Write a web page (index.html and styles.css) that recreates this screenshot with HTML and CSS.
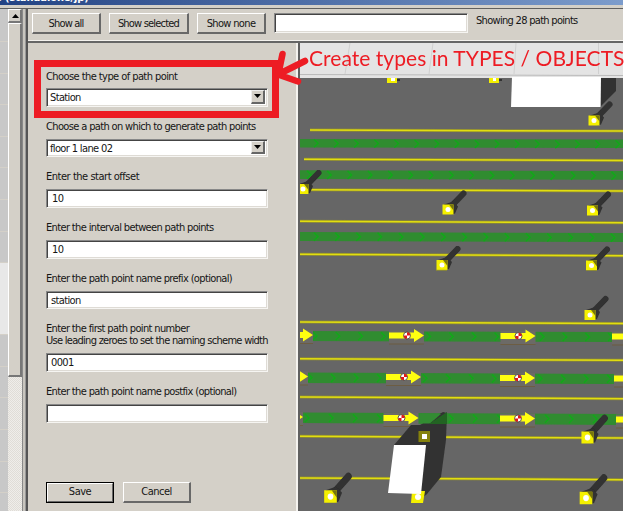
FILE: index.html
```html
<!DOCTYPE html>
<html lang="en">
<head>
<meta charset="utf-8">
<title>Path points</title>
<link rel="stylesheet" href="styles.css">
</head>
<body>
<div class="window">
  <header class="titlebar"><span>e (standalone/jp)</span></header>
  <div class="content">
    <aside class="list">
      <i class="first"></i><i></i><i></i><i></i><i></i><i></i><i></i><i></i>
      <i class="selected"></i><i></i><i></i><i></i><i></i><i></i><i></i>
    </aside>
    <div class="scrollbar">
      <div class="scroll-up"><svg width="7" height="4"><path d="M0 4h7L3.5 0z"/></svg></div>
      <div class="thumb"></div>
    </div>
    <div class="splitter"></div>
    <main class="main">
      <div class="toolbar">
        <button class="btn b1"><span>Show all</span></button>
        <button class="btn b2"><span>Show selected</span></button>
        <button class="btn b3"><span>Show none</span></button>
        <div class="field search"></div>
        <span class="status">Showing 28 path points</span>
      </div>
      <div class="body">
        <form class="form">
          <label class="l1">Choose the type of path point</label>
          <div class="field select"><span>Station</span><b><svg width="7" height="4"><path d="M0 0h7L3.5 4z"/></svg></b></div>
          <label class="l2">Choose a path on which to generate path points</label>
          <div class="field select"><span>floor 1 lane 02</span><b><svg width="7" height="4"><path d="M0 0h7L3.5 4z"/></svg></b></div>
          <label class="l3">Enter the start offset</label>
          <div class="field num">10</div>
          <label class="l4">Enter the interval between path points</label>
          <div class="field num">10</div>
          <label class="l5">Enter the path point name prefix (optional)</label>
          <div class="field">station</div>
          <label class="l6">Enter the first path point number<br><span class="l6b">Use leading zeroes to set the naming scheme width</span></label>
          <div class="field">0001</div>
          <label class="l7">Enter the path point name postfix (optional)</label>
          <div class="field"></div>
          <div class="actions">
            <button type="button" class="btn save"><span>Save</span></button>
            <button type="button" class="btn cancel"><span>Cancel</span></button>
          </div>
        </form>
        <svg class="scene" viewBox="300 43 323 468" width="323" height="468">
          <defs>
            <filter id="soft" x="-20%" y="-20%" width="140%" height="140%"><feGaussianBlur stdDeviation=".6"/></filter>
            <g id="post">
              <path d="M2-2L15.500-16" stroke="#303030" stroke-width="6" stroke-linecap="round"/>
              <path d="M-4-5L5-8 10-3 7 4 4 5z" fill="#303030"/>
              <path d="M-5.500-5H5.500V5H-5.500z" fill="#f4f000"/>
              <path d="M1-5H5.500V1z" fill="#77740c"/>
              <circle r="2.500" fill="#fff"/>
            </g>
            <g id="arrow">
              <path d="M0-5H35V8H0z" fill="#6c6a66"/>
              <path d="M0 8.500H35" stroke="#6e5a38" stroke-width=".8"/>
              <path d="M0-3H25V-6.500L35 0 25 6.500V3H0z" fill="#ffff10"/>
              <circle cx="18" r="3.500" fill="#fff" stroke="#333" stroke-width=".8"/>
              <path d="M18 0V-3.200A3.200 3.200 0 0 1 21.200 0zM18 0V3.200A3.200 3.200 0 0 1 14.800 0z" fill="#e01818"/>
            </g>
            <path id="chev" d="M-2-4L2 0-2 4" fill="none" stroke="#10aa18" stroke-width="1.4"/>
          </defs>
          <path d="M300 43H623V79H300z" fill="#e4e4e4"/>
          <path d="M350 43L345 74M433 43L429 74M516 43L514 74M598.500 43V74" stroke="#d0d0d0" fill="none"/>
          <path d="M300 74.500L623 75.500" stroke="#bbb"/>
          <path d="M300 78H623V511H300z" fill="#666"/>
          <g filter="url(#soft)">
            <path d="M601 78H616V91L601 106z" fill="#333"/>
            <path d="M387 78H397V83H387zM489 78H499V83H489z" fill="#f4f000"/>
            <path d="M391 78H395V81H391zM493 78H496V81H493z" fill="#fff"/>
            <path d="M397 79H400V81H397zM499 79H502V81H499z" fill="#333"/>
            <path d="M512 77H601L600.500 107H511z" fill="#fff"/>
          </g>
          <g fill="#308c30">
            <path d="M300 139L623 139.500V148L300 147.500z"/>
            <path d="M300 170.300L623 171V179.700L300 179z"/>
            <path d="M300 232L623 233V242L300 241z"/>
            <path d="M300 331L623 332V342L300 341z"/>
            <path d="M300 372.500L623 374V384L300 383z"/>
            <path d="M300 412.500L623 414V425L300 423z"/>
          </g>
          <g id="chevrons"></g>
          <g stroke="#8f8c32" stroke-width="3">
            <path d="M310 130L623 131M304 159.300L623 160.500M308 189.700L623 191M300 221.200L623 222.700M300 254.200L623 255.700M300 322L623 323.500M300 358.700L623 360.300M300 397L623 398.700M300 436.300L623 438M300 478L623 479.700"/>
          </g>
          <g stroke="#e2de10" stroke-width="1.500">
            <path d="M310 130L623 131M304 159.300L623 160.500M308 189.700L623 191M300 221.200L623 222.700M300 254.200L623 255.700M300 322L623 323.500M300 358.700L623 360.300M300 397L623 398.700M300 436.300L623 438M300 478L623 479.700"/>
          </g>
          <use href="#arrow" x="278" y="335"/><use href="#arrow" x="389" y="335.500"/><use href="#arrow" x="500.500" y="336"/><use href="#arrow" x="612" y="336.500"/>
          <use href="#arrow" x="273" y="376.500"/><use href="#arrow" x="386" y="377"/><use href="#arrow" x="500" y="378"/><use href="#arrow" x="614" y="378.500"/>
          <use href="#arrow" x="268" y="417"/><use href="#arrow" x="383.500" y="418"/><use href="#arrow" x="500" y="418.500"/><use href="#arrow" x="616" y="419.500"/>
          <g filter="url(#soft)">
            <path d="M394 445L411 425H420L443 412 447 413 446 440 441 477 427 494 420 500z" fill="#333"/>
            <path d="M420 414H441L430 423.500H420z" fill="#308c30"/>
            <path d="M429 424L447 412V424z" fill="#246324"/>
            <path d="M418.500 431H430V442H418.500z" fill="#85820c"/>
            <path d="M422 434H427V439H422z" fill="#fff"/>
            <path d="M412 491H425L423 503H411z" fill="#f4f000"/>
            <circle cx="418" cy="497" r="3" fill="#fff"/>
            <path d="M394 445H426L421 494 388 493z" fill="#fff"/>
            <use href="#post" x="303" y="189"/><use href="#post" x="448" y="209.500"/><use href="#post" x="592.500" y="210.500"/>
            <use href="#post" x="442" y="265"/><use href="#post" x="591.500" y="265.500"/><use href="#post" x="590" y="315"/>
            <use href="#post" x="594" y="120.500"/>
            <use href="#post" transform="translate(330.500 496.500) scale(1.150 1.250)"/>
            <use href="#post" transform="translate(587.500 437.500) scale(1.100 1.200)"/>
            <use href="#post" transform="translate(586 498) scale(1.150 1.250)"/>
          </g>
          <path d="M436 270.300H447M586 270.500H597" stroke="#8f8c32"/>
        </svg>
      </div>
    </main>
  </div>
  <svg class="annotation" width="624" height="511">
    <path d="M37.500 63.500H275.500V114.500H37.500z" fill="none" stroke="#ed1c24" stroke-width="7"/>
    <path d="M282.500 54L279 71M305 61L278 74.500 298 81.500" fill="none" stroke="#ed1c24" stroke-width="6.500" stroke-linecap="round" stroke-linejoin="round"/>
  </svg>
  <div class="note">Create types in TYPES / OBJECTS</div>
</div>
<script src="scene.js"></script>
</body>
</html>
```
FILE: styles.css
```css
* { box-sizing: border-box; }
body { margin: 0; background: #fff; }
.window {
  position: relative;
  width: 624px;
  height: 511px;
  overflow: hidden;
  display: flex;
  flex-direction: column;
  font: 11px/12px "DejaVu Sans Condensed", "DejaVu Sans", sans-serif;
  font-stretch: condensed;
  color: #151515;
  letter-spacing: -0.64px;
}
.titlebar {
  height: 8px;
  width: 623px;
  flex: none;
  overflow: hidden;
  background: linear-gradient(90deg, #234384, #7c9ccc);
  border-bottom: 3px solid #d4d0c8;
  color: #fff;
  font-weight: bold;
}
.titlebar span { display: block; margin: -8px 0 0 -5px; letter-spacing: -0.1px; }
.content { display: flex; flex: 1; width: 623px; border-top: 1px solid #606060; background: #d4d0c8; }
.list { width: 8px; overflow: hidden; background: #c8c8c8; }
.list i { display: block; height: 31.6px; border-bottom: 1px solid #d4d0c8; }
.list .first { height: 33px; }
.list .selected { height: 72px; background: #e8e8e8; }
.scrollbar {
  width: 14px;
  background: repeating-conic-gradient(#e0ddd7 0 25%, #efedea 0 50%) 0 0 / 2px 2px;
}
.scroll-up, .thumb { background: #d4d0c8; border: 1px solid #fff; border-right: 2px solid #777; border-bottom: 2px solid #777; }
.scroll-up { height: 14px; display: flex; align-items: center; justify-content: center; padding-left: 1px; }
.scroll-up svg, .select svg { display: block; }
.thumb { height: 354px; }
.splitter { width: 6px; border-left: 1px solid #888; border-right: 2px solid #555; background: linear-gradient(90deg, #c8c5be 0 2px, #999 2px); }
.main { flex: 1; display: flex; flex-direction: column; }
.toolbar { height: 34px; display: flex; padding: 4px 0 0 4px; border-bottom: 2px solid #666; box-shadow: inset 0 -1px #f4f2ee; }
.btn {
  height: 21px;
  padding: 2px 0 0;
  margin: 0;
  border: 1px solid #fff;
  border-right: 2px solid #686868;
  border-bottom: 2px solid #686868;
  background: #d4d0c8;
  font: inherit;
  color: inherit;
  letter-spacing: -0.8px;
  flex: none;
}
.b1 { width: 69px; }
.b2 { width: 80px; margin-left: 8px; }
.b3 { width: 69px; margin-left: 8px; letter-spacing: -0.65px; }
.field {
  height: 18.7px;
  flex: none;
  border: 1px solid #888;
  border-right-color: #f6f5f2;
  border-bottom-color: #f6f5f2;
  box-shadow: inset 1px 1px #444, inset -1px -1px #dedbd5;
  background: #fff;
  line-height: 17px;
  padding-left: 4px;
  white-space: pre;
}
.search { width: 194px; height: 20px; margin-left: 8px; }
.status { margin: 2px 0 0 8px; letter-spacing: -0.7px; }
.body { flex: 1; display: flex; }
.form {
  width: 272px;
  padding: 28px 0 0 18px;
  border-right: 2px solid #606060;
  box-shadow: inset -2px 0 #f4f2ee;
  display: flex;
  flex-direction: column;
}
label { display: block; height: 12px; margin-bottom: 6px; white-space: nowrap; }
.l1 { height: 11px; letter-spacing: -0.57px; }
.l3 { letter-spacing: -0.47px; }
.l6b { letter-spacing: -0.72px; }
.form .field { width: 222px; margin-bottom: 14px; }
.select { display: flex; justify-content: space-between; padding: 1px 2px 2px 3px; line-height: 16px; }
.select b { width: 14px; background: #d4d0c8; border: 1px solid #eee; border-right: 2px solid #666; border-bottom: 2px solid #666; display: flex; align-items: center; justify-content: center; }
.num { padding-left: 5px; }
.l6 { height: 24px; }
.actions { display: flex; gap: 9px; margin-top: 45px; }
.actions .btn { width: 68px; padding: 0; letter-spacing: -0.5px; }
.save { outline: 1px solid #000; outline-offset: -1px; border-width: 2px; }
.scene { display: block; flex: none; }
.annotation { position: absolute; left: 0; top: 0; }
.note { position: absolute; left: 309px; top: 46px; font: 21px/24px Lato, sans-serif; color: #ed1c24; letter-spacing: 0.04px; white-space: nowrap; }
```
FILE: scene.js
```js
// Direction chevrons along each lane: start x, spacing, y at the left edge, clear spans for the arrows.
const lanes = [
  [316, 20.1, 143.3, []],
  [309, 20.3, 174.8, []],
  [316, 21.2, 236.6, []],
  [315, 22.7, 336, [[389, 424], [500, 535]]],
  [310, 23, 377.8, [[386, 422], [500, 535]]],
  [307, 24, 418, [[383, 419], [500, 535]]]
];
const group = document.getElementById('chevrons');
for (const [start, step, y, gaps] of lanes) {
  for (let x = start; x < 623; x += step) {
    if (gaps.some(([a, b]) => x > a && x < b)) continue;
    const use = document.createElementNS('http://www.w3.org/2000/svg', 'use');
    use.setAttribute('href', '#chev');
    use.setAttribute('x', x);
    use.setAttribute('y', y + (x - 300) / 300);
    group.appendChild(use);
  }
}
```
